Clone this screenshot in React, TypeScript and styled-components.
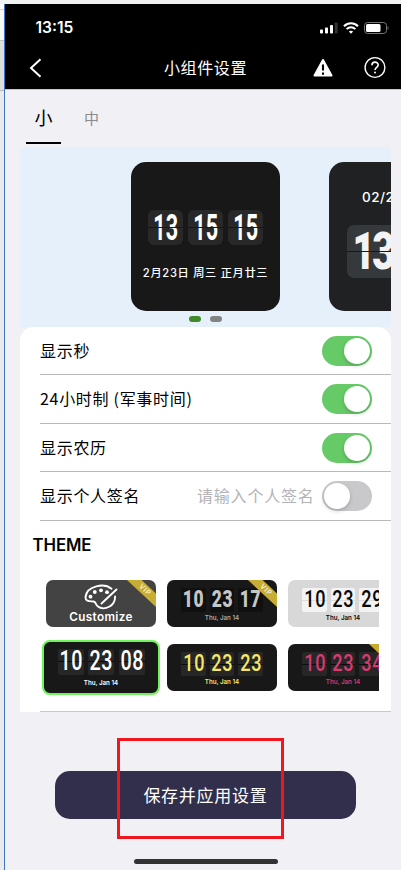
import React from "react";
import styled, { createGlobalStyle } from "styled-components";

const CJK = '"Noto Sans CJK SC", "Noto Sans", sans-serif';
const LATIN = 'Inter, "Noto Sans CJK SC", sans-serif';

const GlobalStyle = createGlobalStyle`
  * { box-sizing: border-box; }
  body { margin: 0; background: #f1f0f5; font-family: ${CJK}; overflow: hidden; }
`;

const Desktop = styled.div`
  display: flex;
  flex-direction: column;
  width: 401px;
  height: 870px;
  overflow: hidden;
`;
const TopStrip = styled.div`
  flex: none;
  height: 4px;
  background: #f1f1f2;
`;
const Split = styled.div`
  display: flex;
  flex: 1;
  min-height: 0;
`;
const Gutter = styled.div`
  flex: none;
  width: 5px;
  border-right: 1px solid #3b74c0;
  background: linear-gradient(#fafafa 0 5px, #d2d2d2 5px 6px, #f8f8f8 6px 36px, #c2c2c2 36px 37px, #dededf 37px 86px, #bbb 86px 87px, #eaeaec 87px);
`;
const Phone = styled.main`
  flex: 1;
  min-width: 0;
  display: flex;
  flex-direction: column;
  background: #f1f0f5;
`;
const Header = styled.header`
  flex: none;
  height: 86px;
  background: #000;
  border-bottom: 1px solid #c9c9cb;
  color: #fff;
`;
const StatusBar = styled.div`
  display: flex;
  align-items: center;
  height: 48px;
  padding: 0 12px 0 30.5px;
`;
const StatusTime = styled.span`
  flex: 1;
  font: 600 15.6px/20px ${LATIN};
`;
const StatusIcons = styled.div`
  display: flex;
  align-items: center;
  gap: 5px;
`;
const NavBar = styled.nav`
  display: grid;
  grid-template-columns: 100px 1fr 24px 24px;
  column-gap: 28px;
  align-items: center;
  height: 32px;
  padding: 0 14px 0 24px;
`;
const NavTitle = styled.h1`
  margin: 0;
  padding: 0 0 2px 7px;
  font: 400 16px/24px ${CJK};
  letter-spacing: 0.6px;
  white-space: nowrap;
`;
const Tabs = styled.div`
  flex: none;
  display: flex;
  gap: 13px;
  height: 57px;
  padding: 13px 0 0 21px;
`;
const Tab = styled.button<{ $active?: boolean }>`
  border: 0;
  border-bottom: 2px solid ${(p) => (p.$active ? "#000" : "transparent")};
  padding: 0 0 10px;
  width: 35px;
  height: 41px;
  background: none;
  color: ${(p) => (p.$active ? "#000" : "#8b8b8e")};
  font: 400 ${(p) => (p.$active ? 18 : 15)}px/29px ${CJK};
`;
const Body = styled.div`
  flex: none;
  width: 371px;
  margin-left: 15px;
`;
const Preview = styled.section`
  display: flex;
  flex-direction: column;
  height: 180px;
  padding-top: 15px;
  overflow: hidden;
  background: #e5f0fb;
`;
const Slides = styled.div`
  display: flex;
  gap: 49px;
  padding-left: 111px;
`;
const Slide = styled.article<{ $alt?: boolean }>`
  flex: none;
  display: flex;
  flex-direction: column;
  align-items: ${(p) => (p.$alt ? "flex-start" : "center")};
  width: 149px;
  height: 149px;
  padding: ${(p) => (p.$alt ? "25px 0 0 18px" : "48px 0 0")};
  border-radius: 15px;
  background: ${(p) => (p.$alt ? "#1f2123" : "#181818")};
  color: #fff;
`;
const SlideDate = styled.div`
  margin-top: 20px;
  font: 500 11.2px/17px ${LATIN};
  letter-spacing: 0.7px;
  white-space: nowrap;
`;
const SlideDay = styled.div`
  margin: 0 0 17px 15px;
  font: 500 13.5px/21px ${LATIN};
  letter-spacing: 0.5px;
  white-space: nowrap;
`;
const Tiles = styled.div<{ $gap: number }>`
  display: flex;
  gap: ${(p) => p.$gap}px;
`;
const TileBox = styled.div<{ $w: number; $h: number; $bg: string; $seam: string; $radius: number; $behind?: boolean }>`
  position: relative;
  z-index: 0;
  flex: none;
  display: flex;
  align-items: center;
  justify-content: center;
  width: ${(p) => p.$w}px;
  height: ${(p) => p.$h}px;
  border-radius: ${(p) => p.$radius}px;
  background: ${(p) => p.$bg};
  &::after {
    content: "";
    position: absolute;
    z-index: ${(p) => (p.$behind ? -1 : 1)};
    left: 0;
    right: 0;
    top: calc(50% - 0.5px);
    height: 1px;
    background: ${(p) => p.$seam};
  }
`;
const Digits = styled.span<{ $size: number; $squeeze: number; $weight: number; $color: string; $track?: number }>`
  font: ${(p) => p.$weight} ${(p) => p.$size}px/1 Roboto, sans-serif;
  letter-spacing: ${(p) => p.$track || 0}px;
  margin-right: ${(p) => -(p.$track || 0)}px;
  color: ${(p) => p.$color};
  transform: scaleX(${(p) => p.$squeeze});
`;
const Dots = styled.div`
  display: flex;
  gap: 9px;
  margin: 5px 0 0 169px;
`;
const Dot = styled.i<{ $on?: boolean }>`
  width: 12px;
  height: 6px;
  border-radius: 3px;
  background: ${(p) => (p.$on ? "#418a2b" : "#838383")};
`;
const Panel = styled.section`
  height: 385px;
  border-radius: 14px 14px 0 0;
  background: #fff;
`;
const Row = styled.div<{ $h: number }>`
  display: flex;
  align-items: center;
  height: ${(p) => p.$h}px;
  margin-left: 20px;
  padding-right: 19px;
  border-bottom: 1px solid #b9b9bb;
`;
const RowLabel = styled.span`
  flex: 1;
  padding-bottom: 2px;
  font: 400 16px/24px ${CJK};
  letter-spacing: 0.7px;
  color: #000;
  white-space: nowrap;
`;
const Signature = styled.input`
  width: 125px;
  border: 0;
  padding: 0 0 2px;
  outline: 0;
  background: none;
  font: 400 16px/24px ${CJK};
  letter-spacing: 0.8px;
  &::placeholder { color: #b3b3b6; opacity: 1; }
`;
const Switch = styled.button<{ $on?: boolean }>`
  flex: none;
  display: flex;
  justify-content: ${(p) => (p.$on ? "flex-end" : "flex-start")};
  width: 50px;
  height: 30px;
  padding: 2px;
  border: 0;
  border-radius: 15px;
  background: ${(p) => (p.$on ? "#66ca67" : "#c9c9cc")};
`;
const Knob = styled.i`
  width: 26px;
  height: 26px;
  border-radius: 50%;
  background: #fff;
  box-shadow: 0 2px 4px rgba(0, 0, 0, 0.18);
`;
const ThemeTitle = styled.h2`
  margin: 0;
  padding: 12px 0 0 12.5px;
  height: 55px;
  font: 600 16.8px/24px ${LATIN};
  letter-spacing: -0.1px;
`;
const ThemeGrid = styled.div`
  display: grid;
  grid-template-columns: repeat(3, 110px);
  grid-template-rows: 47px 47px;
  gap: 17px 11px;
  width: 359px;
  height: 131px;
  padding: 4px 0 0 26px;
  overflow: hidden;
`;
const Thumb = styled.article<{ $bg: string; $selected?: boolean }>`
  position: relative;
  display: flex;
  flex-direction: column;
  align-items: center;
  padding-top: ${(p) => (p.$selected ? 6.5 : 8)}px;
  border-radius: 7px;
  overflow: hidden;
  background: ${(p) => p.$bg};
  ${(p) => p.$selected && "margin: -4px; border: 2px solid #70f45c; border-radius: 8px;"}
`;
const ThumbDate = styled.span<{ $color: string; $top: number }>`
  margin-top: ${(p) => p.$top}px;
  font: 600 6.2px/8px ${LATIN};
  color: ${(p) => p.$color};
  white-space: nowrap;
`;
const CustomizeLabel = styled.span`
  margin-top: 0;
  color: #fff;
  font: 600 11.7px/14px ${LATIN};
  letter-spacing: 0.35px;
`;
const PaletteIcon = styled.svg`
  flex: none;
  margin-top: -4px;
`;
const Ribbon = styled.div`
  position: absolute;
  z-index: 2;
  top: 4.5px;
  right: -11.5px;
  width: 46px;
  height: 10px;
  background: #c8ad35;
  color: #fffbe2;
  font: 500 7px/10px ${LATIN};
  letter-spacing: 0.7px;
  text-align: center;
  transform: rotate(43deg);
`;
const PanelEnd = styled.div`
  height: 1px;
  margin-left: 20px;
  margin-top: -1px;
  background: #c8c8ca;
`;
const Footer = styled.footer`
  flex: 1;
  display: flex;
  flex-direction: column;
  align-items: center;
  padding: 59px 0 0 5px;
`;
const SaveButton = styled.button`
  position: relative;
  flex: none;
  width: 301px;
  height: 48px;
  padding: 0;
  border: 0;
  border-radius: 15px;
  background: #322f4c;
  color: #fff;
  font: 400 17px/24px ${CJK};
  letter-spacing: 0.75px;
`;
const Highlight = styled.span`
  position: absolute;
  left: 62px;
  top: -33px;
  width: 167px;
  height: 101px;
  border: 3px solid #ef1620;
`;
const HomeIndicator = styled.div`
  flex: none;
  width: 144px;
  height: 5px;
  margin-top: 40px;
  border-radius: 3px;
  background: #333;
`;

function ThemeThumb(props: {
  parts: string[];
  color: string;
  bg?: string;
  tile?: string;
  seam?: string;
  heavy?: boolean;
  selected?: boolean;
  vip?: boolean;
  date?: string;
}) {
  const { parts, color, bg = "#181818", tile = "#272727", seam = "#0c0c0c", heavy, selected, vip, date } = props;
  const w = selected ? 26 : 24.5;
  return (
    <Thumb $bg={bg} $selected={selected}>
      <Tiles $gap={selected ? 4.5 : 4}>
        {parts.map((p, i) => (
          <TileBox key={i} $w={w} $h={selected ? 26 : 24} $bg={tile} $seam={seam} $radius={2} $behind>
            <Digits
              $size={selected ? 27 : 23.5}
              $squeeze={heavy ? 0.74 : selected ? 0.73 : 0.77}
              $weight={heavy ? 900 : 500}
              $color={color}
              $track={1}
            >
              {p}
            </Digits>
          </TileBox>
        ))}
      </Tiles>
      <ThumbDate $color={date || color} $top={selected ? 4.5 : 2}>Thu, Jan 14</ThumbDate>
      {vip && <Ribbon>VIP</Ribbon>}
    </Thumb>
  );
}

export default function App() {
  return (
    <>
      <GlobalStyle />
      <Desktop>
        <TopStrip />
        <Split>
          <Gutter />
          <Phone>
            <Header>
              <StatusBar>
                <StatusTime>13:15</StatusTime>
                <StatusIcons>
                  <svg width="18" height="12" viewBox="0 0 18 12">
                    <rect x="0" y="7.5" width="3" height="4" rx="0.8" fill="#fff" />
                    <rect x="5" y="5.5" width="3" height="6" rx="0.8" fill="#fff" />
                    <rect x="10" y="3" width="3" height="8.5" rx="0.8" fill="#fff" />
                    <rect x="14.7" y="0.5" width="3" height="11" rx="0.8" fill="#333" />
                  </svg>
                  <svg width="16" height="12" viewBox="0 0 16 12" fill="none" stroke="#fff">
                    <path d="M1 4.3C5 .3 11 .3 15 4.3" strokeWidth="2.1" />
                    <path d="M3.6 7.1c2.5-2.4 6.3-2.4 8.8 0" strokeWidth="2" />
                    <path d="M8 11.8 5.8 9.5c1.3-1.1 3.1-1.1 4.4 0z" fill="#fff" stroke="none" />
                  </svg>
                  <svg width="25" height="12" viewBox="0 0 25 12">
                    <rect x="0.5" y="0.5" width="22" height="11" rx="3" fill="none" stroke="#777" />
                    <rect x="2" y="2" width="14.5" height="8" rx="1.5" fill="#fff" />
                    <path d="M23.7 4v4c1.2-.4 1.2-3.6 0-4z" fill="#777" />
                  </svg>
                </StatusIcons>
              </StatusBar>
              <NavBar>
                <svg width="14" height="20" viewBox="0 0 14 20" fill="none" stroke="#fff" strokeWidth="2">
                  <path d="M11.500 1.300 2 10l9.500 8.700" />
                </svg>
                <NavTitle>小组件设置</NavTitle>
                <svg width="24" height="24" viewBox="0 0 24 24">
                  <path d="M12 4 20.500 19.500h-17z" fill="#fff" stroke="#fff" strokeWidth="2" strokeLinejoin="round" />
                  <path d="M12 8.500v6M12 16.500v2.200" stroke="#000" strokeWidth="2.100" />
                </svg>
                <svg width="24" height="24" viewBox="0 0 24 24" fill="none" stroke="#fff">
                  <circle cx="12" cy="11.500" r="9.900" strokeWidth="1.400" />
                  <path d="M8.900 9.300c0-4.200 6.300-4.100 6.300-.4 0 2.500-3.100 2.300-3.100 5" strokeWidth="1.600" />
                  <circle cx="12" cy="16.500" r="1" fill="#fff" stroke="none" />
                </svg>
              </NavBar>
            </Header>

            <Tabs>
              <Tab $active>小</Tab>
              <Tab>中</Tab>
            </Tabs>

            <Body>
              <Preview>
                <Slides>
                  <Slide>
                    <Tiles $gap={5}>
                      {["13", "15", "15"].map((n, i) => (
                        <TileBox key={i} $w={35} $h={35} $bg="#282828" $seam="#181818" $radius={6}>
                          <Digits $size={36} $squeeze={0.6} $weight={700} $color="#fff">{n}</Digits>
                        </TileBox>
                      ))}
                    </Tiles>
                    <SlideDate>2月23日 周三 正月廿三</SlideDate>
                  </Slide>
                  <Slide $alt>
                    <SlideDay>02/23</SlideDay>
                    <TileBox $w={54} $h={53} $bg="#35393b" $seam="#15181a" $radius={7}>
                      <Digits $size={52} $squeeze={0.75} $weight={900} $color="#f3f3f3" $track={-4}>13</Digits>
                    </TileBox>
                  </Slide>
                </Slides>
                <Dots>
                  <Dot $on />
                  <Dot />
                </Dots>
              </Preview>

              <Panel>
                <Row $h={48}>
                  <RowLabel>显示秒</RowLabel>
                  <Switch $on><Knob /></Switch>
                </Row>
                <Row $h={49}>
                  <RowLabel>24小时制 (军事时间)</RowLabel>
                  <Switch $on><Knob /></Switch>
                </Row>
                <Row $h={48}>
                  <RowLabel>显示农历</RowLabel>
                  <Switch $on><Knob /></Switch>
                </Row>
                <Row $h={49}>
                  <RowLabel>显示个人签名</RowLabel>
                  <Signature placeholder="请输入个人签名" />
                  <Switch><Knob /></Switch>
                </Row>
                <ThemeTitle>THEME</ThemeTitle>
                <ThemeGrid>
                  <Thumb $bg="#434343">
                    <PaletteIcon width="34" height="26" viewBox="0 0 34 26" fill="none" stroke="#fff" strokeWidth="1.9" strokeLinecap="round">
                      <path d="M27.5 4.7C20-1.4 3.2 1.8 1.6 12.5c-.8 6 5.7 4.5 8 5 3.4.8 1 3.4 5.3 5.7 5.7 3 16.2-.5 16.2-10.8" />
                      <path d="M32.5 5.5 17.5 19.500" />
                      <g fill="#fff" stroke="none">
                        <circle cx="6.500" cy="12.700" r="1.900" />
                        <circle cx="10.800" cy="8" r="1.900" />
                        <circle cx="17" cy="6.300" r="1.900" />
                        <circle cx="23" cy="8.200" r="1.900" />
                      </g>
                    </PaletteIcon>
                    <CustomizeLabel>Customize</CustomizeLabel>
                    <Ribbon>VIP</Ribbon>
                  </Thumb>
                  <ThemeThumb parts={["10", "23", "17"]} color="#c6c6c6" tile="#101010" heavy vip date="#aaa" />
                  <ThemeThumb parts={["10", "23", "29"]} color="#080808" bg="#d8d8d8" tile="#f3f3f3" seam="#ddd" />
                  <ThemeThumb parts={["10", "23", "08"]} color="#fff" selected />
                  <ThemeThumb parts={["10", "23", "23"]} color="#f6e769" />
                  <ThemeThumb parts={["10", "23", "34"]} color="#d93a70" vip />
                </ThemeGrid>
              </Panel>
              <PanelEnd />
            </Body>

            <Footer>
              <SaveButton>
                保存并应用设置
                <Highlight />
              </SaveButton>
              <HomeIndicator />
            </Footer>
          </Phone>
        </Split>
      </Desktop>
    </>
  );
}
